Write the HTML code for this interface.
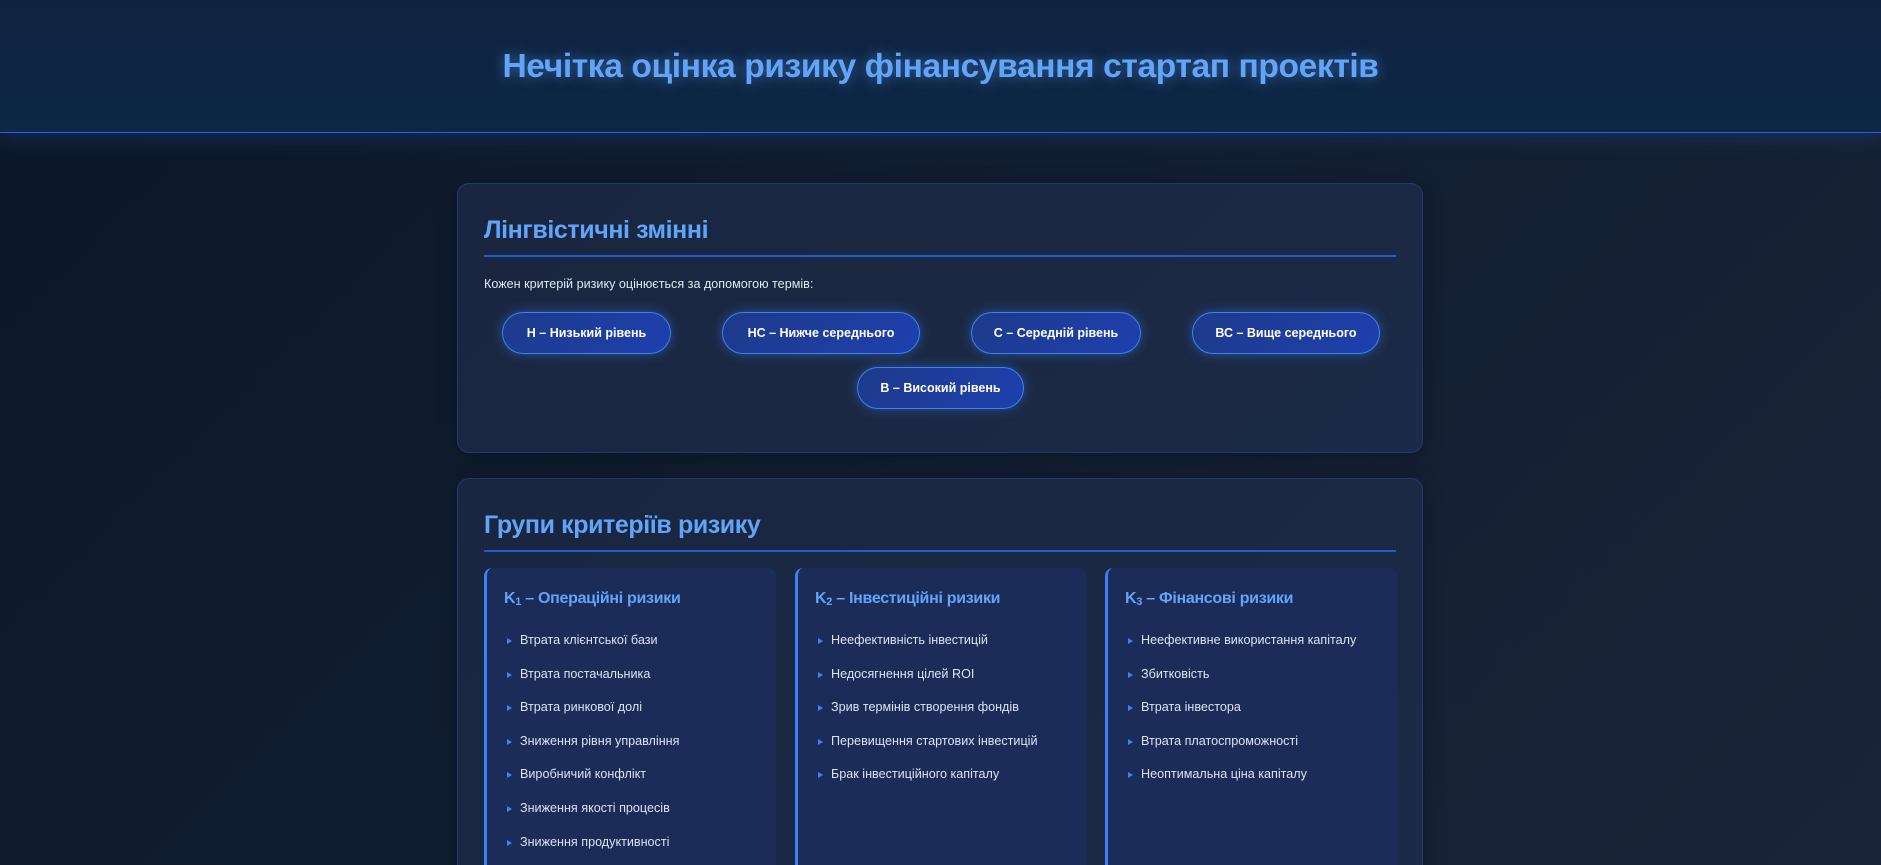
<!DOCTYPE html>
<html><head><meta charset="utf-8">
<style>
*{box-sizing:border-box;margin:0;padding:0}
html,body{width:1881px;height:865px;overflow:hidden}
body{font-family:"Liberation Sans","DejaVu Sans",sans-serif;background:linear-gradient(135deg,#0c1828 0%,#111d30 45%,#1a2438 100%);color:#e2e8f0;position:relative}
header{height:133px;background:linear-gradient(180deg,#0f2340,#0e2746);border-bottom:1px solid #2563eb;box-shadow:0 4px 20px rgba(37,99,235,.25);text-align:center}
header h1{font-size:33.6px;line-height:133px;color:#60a5fa;font-weight:bold;text-shadow:0 0 14px rgba(96,165,250,.55);letter-spacing:-0.4px}
.card{position:absolute;left:457px;width:966px;background:linear-gradient(135deg,#1a2640,#1b2a46);border:1px solid #1e3a70;border-radius:12px;padding:0 26px;box-shadow:0 4px 20px rgba(0,0,0,.3)}
.card h2{font-size:25px;color:#60a5fa;font-weight:bold;letter-spacing:-0.4px}
.rule{height:2px;background:#2563eb;opacity:.85}
.pill{position:absolute;height:42px;border-radius:21px;background:linear-gradient(135deg,#1e3a8a,#1e40af);border:1px solid #3b82f6;box-shadow:0 0 12px rgba(59,130,246,.45);color:#fff;font-weight:bold;font-size:12.5px;display:flex;align-items:center;justify-content:center;white-space:nowrap}
.col{position:absolute;top:89px;width:292px;height:320px;background:#1c2c58;border-left:3px solid #3b82f6;border-radius:8px;padding:22px 0 0 17px}
.col h3{font-size:16px;color:#60a5fa;font-weight:bold;margin-bottom:16px;letter-spacing:-0.3px}
.col h3 sub{font-size:11px;vertical-align:-2px}
.col li{list-style:none;font-size:12.6px;color:#dbe3ef;height:33.6px;line-height:33.6px;position:relative;padding-left:16px}
.col li:before{content:"";position:absolute;left:3px;top:14px;border-left:5px solid #3b82f6;border-top:3px solid transparent;border-bottom:3px solid transparent}
</style></head><body>
<header><h1>Нечітка оцінка ризику фінансування стартап проектів</h1></header>

<div class="card" style="top:183px;height:270px">
  <h2 style="position:absolute;top:32px;left:26px">Лінгвістичні змінні</h2>
  <div class="rule" style="position:absolute;top:71px;left:26px;right:26px"></div>
  <div style="position:absolute;top:93px;left:26px;font-size:12.6px;color:#e2e8f0">Кожен критерій ризику оцінюється за допомогою термів:</div>
  <div class="pill" style="left:44px;top:128px;width:169px">Н – Низький рівень</div>
  <div class="pill" style="left:264px;top:128px;width:198px">НС – Нижче середнього</div>
  <div class="pill" style="left:513px;top:128px;width:170px">С – Середній рівень</div>
  <div class="pill" style="left:734px;top:128px;width:188px">ВС – Вище середнього</div>
  <div class="pill" style="left:399px;top:183px;width:167px">В – Високий рівень</div>
</div>

<div class="card" style="top:478px;height:420px">
  <h2 style="position:absolute;top:32px;left:26px">Групи критеріїв ризику</h2>
  <div class="rule" style="position:absolute;top:71px;left:26px;right:26px"></div>
  <div class="col" style="left:26px">
    <h3>K<sub>1</sub> – Операційні ризики</h3>
    <ul><li>Втрата клієнтської бази</li><li>Втрата постачальника</li><li>Втрата ринкової долі</li><li>Зниження рівня управління</li><li>Виробничий конфлікт</li><li>Зниження якості процесів</li><li>Зниження продуктивності</li></ul>
  </div>
  <div class="col" style="left:337px">
    <h3>K<sub>2</sub> – Інвестиційні ризики</h3>
    <ul><li>Неефективність інвестицій</li><li>Недосягнення цілей ROI</li><li>Зрив термінів створення фондів</li><li>Перевищення стартових інвестицій</li><li>Брак інвестиційного капіталу</li></ul>
  </div>
  <div class="col" style="left:647px">
    <h3>K<sub>3</sub> – Фінансові ризики</h3>
    <ul><li>Неефективне використання капіталу</li><li>Збитковість</li><li>Втрата інвестора</li><li>Втрата платоспроможності</li><li>Неоптимальна ціна капіталу</li></ul>
  </div>
</div>
</body></html>
